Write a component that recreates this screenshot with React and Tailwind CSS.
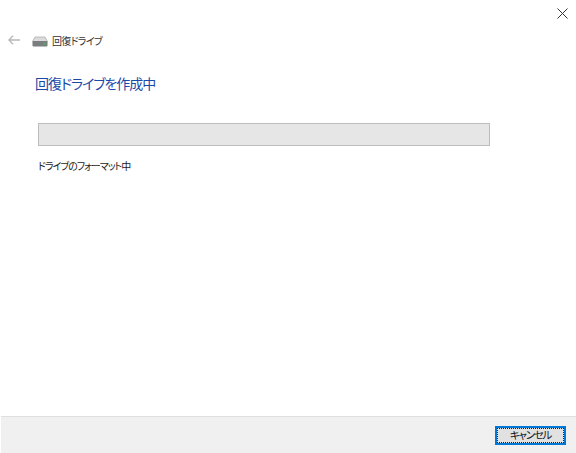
import React from 'react';

const cjk = { fontFamily: '"Noto Sans CJK JP", "Noto Sans", sans-serif' };

const App = () => {
  return (
    <div className="w-[576px] h-[453px] bg-white flex flex-col overflow-hidden [font-feature-settings:'palt']" style={cjk}>
      {/* Top bar with close */}
      <div className="h-[27px] flex justify-end items-start pt-[8px] pr-[8px]">
        <svg width="11" height="11" viewBox="0 0 11 11" fill="none" stroke="#333" strokeWidth="1">
          <path d="M0.5 0.5L10.5 10.5M10.5 0.5L0.5 10.5" />
        </svg>
      </div>

      {/* Nav row */}
      <div className="h-[26px] flex items-center pl-[8px]">
        <svg width="12" height="10" viewBox="0 0 12 10" fill="none" stroke="#b8b8b8" strokeWidth="1.3">
          <path d="M12 5H1M5 0.8L0.9 5L5 9.2" />
        </svg>
        <svg className="ml-[12px] mt-[2px]" width="16" height="11" viewBox="0 0 16 11">
          <path d="M3 1h10l2.5 4.5H.5z" fill="#dcdcdc" stroke="#9a9a9a" strokeWidth="0.6" />
          <rect x="0.5" y="5" width="15" height="5.5" rx="1.2" fill="#7a7d7e" />
          <rect x="11.5" y="6.8" width="2" height="2" fill="#4fae58" />
        </svg>
        <span className="ml-[4px] text-[10px] tracking-[-0.7px] text-[#333]">回復ドライブ</span>
      </div>

      {/* Content */}
      <div className="flex-1 pl-[35px]">
        <h1 className="mt-[18px] text-[14px] leading-[24px] tracking-[-1.05px] font-normal text-[#1c49a8]">回復ドライブを作成中</h1>
        <div className="mt-[28px] ml-[3px] w-[452px] h-[23px] bg-[#e6e6e6] border border-[#bcbcbc]"></div>
        <p className="mt-[11px] ml-[3px] text-[10px] leading-[18px] tracking-[-1px] text-[#222]">ドライブのフォーマット中</p>
      </div>

      {/* Footer */}
      <div className="h-[37px] ml-[1px] bg-[#f0f0f0] border-t border-[#dfdfdf] flex items-center justify-end pr-[10px]">
        <button className="w-[71px] h-[19px] mt-[1px] bg-[#e1e1e1] border-2 border-[#0078d7] outline outline-1 outline-dotted -outline-offset-3 outline-[#222] text-[10.5px] leading-none tracking-[-1.3px] text-[#111]">キャンセル</button>
      </div>
    </div>
  );
};

export default App;
